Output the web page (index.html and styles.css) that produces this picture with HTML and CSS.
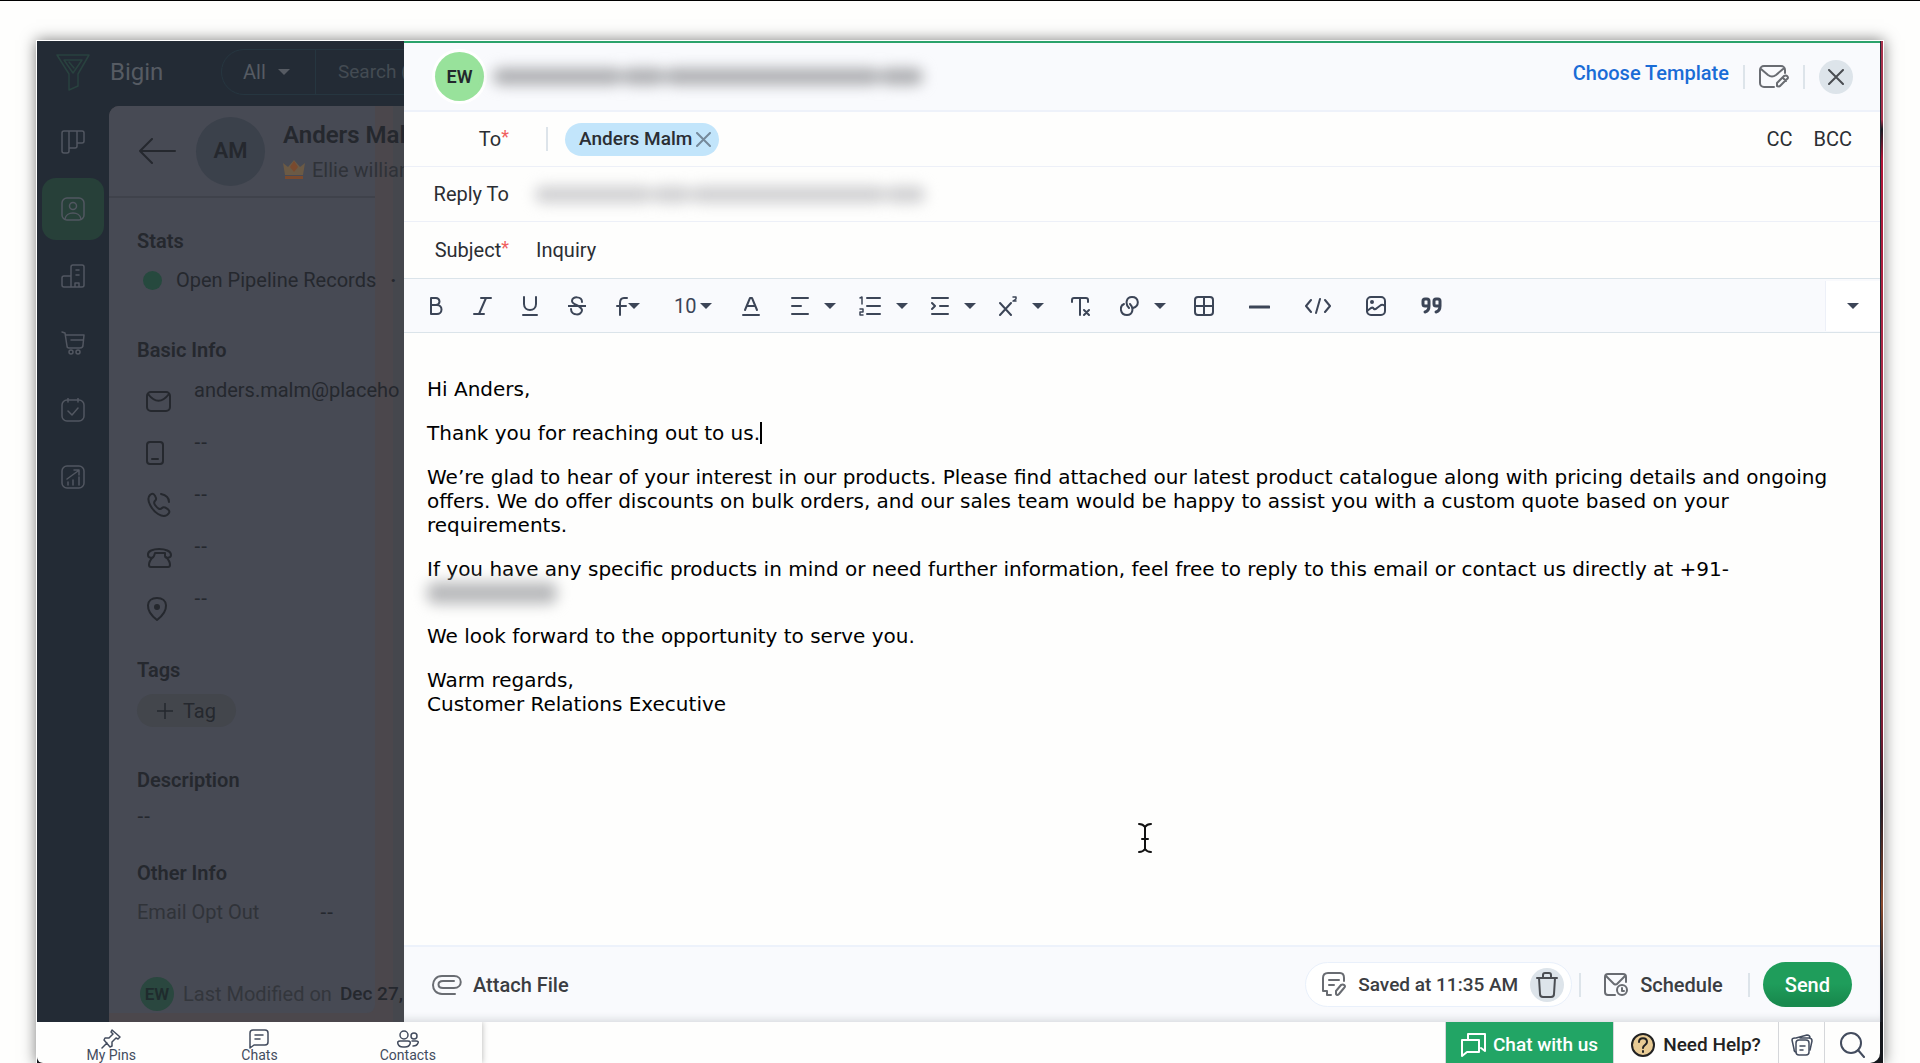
FILE: index.html
```html
<!DOCTYPE html>
<html lang="en">
<head>
<meta charset="utf-8">
<title>Bigin</title>
<meta name="viewport" content="width=device-width, initial-scale=1">
<link rel="stylesheet" href="styles.css">
</head>
<body>
<div class="frame">
  <div class="main">
    <div class="app">
      <header class="topbar">
        <svg class="logo" width="36" height="40" viewBox="0 0 36 40"><path d="M2 3h32L23 22v12l-9 4V22z"/><path d="M9 8h18l-9 13z"/><path d="M14 10l5 6"/></svg>
        <span class="brand">Bigin</span>
        <div class="searchbox">
          <button type="button" class="scope">All <i class="tri"></i></button>
          <span class="search-hint">Search (</span>
        </div>
      </header>
      <div class="app-body">
        <nav class="rail">
          <a href="#" aria-label="Pipelines"><svg width="24" height="24" viewBox="0 0 24 24"><path d="M1 3a2 2 0 0 1 2-2h18a2 2 0 0 1 2 2v8a2 2 0 0 1-2 2h-5v3a2 2 0 0 1-2 2H8v3a2 2 0 0 1-2 2H3a2 2 0 0 1-2-2zM8 1v17M16 1v12"/></svg></a>
          <a href="#" class="active" aria-label="Contacts"><svg width="24" height="24" viewBox="0 0 24 24"><rect x="1" y="1" width="22" height="22" rx="5"/><circle cx="12" cy="9" r="3.500"/><path d="M4 22c1-8 15-8 16 0"/></svg></a>
          <a href="#" aria-label="Companies"><svg width="24" height="24" viewBox="0 0 24 24"><path d="M10 23V3a2 2 0 0 1 2-2h9a2 2 0 0 1 2 2v18a2 2 0 0 1-2 2H3a2 2 0 0 1-2-2v-7a2 2 0 0 1 2-2h7M15 6h3M15 11h3M14 23v-4h4v4"/></svg></a>
          <a href="#" aria-label="Products"><svg width="24" height="24" viewBox="0 0 24 24"><path d="M1 1l3 1 2 13q0 2 2 2h11q3 0 3-3l1-10H5M10 9h12"/><circle cx="10" cy="21" r="2"/><circle cx="17" cy="21" r="2"/></svg></a>
          <a href="#" aria-label="Activities"><svg width="24" height="24" viewBox="0 0 24 24"><rect x="1" y="2" width="22" height="21" rx="5"/><path d="M7 0v4M17 0v4M7 13l4 4 6-7"/></svg></a>
          <a href="#" aria-label="Dashboards"><svg width="24" height="24" viewBox="0 0 24 24"><rect x="1" y="1" width="22" height="22" rx="5"/><path d="M6 14l11-8M13 5h5v5M7 20v-3M12 20v-5M18 20v-8"/></svg></a>
        </nav>
        <div class="record-wrap">
          <section class="record">
            <div class="record-head">
              <svg class="back" width="38" height="26" viewBox="0 0 38 26"><path d="M14 1L2 13l12 12M2 13h35"/></svg>
              <span class="avatar-am">AM</span>
              <div class="who">
                <h1>Anders Malm</h1>
                <p><svg width="22" height="20" viewBox="0 0 22 20"><path fill="#6b5a45" d="M0 3l5 4 6-7 6 7 5-4-2 12H2z"/><path fill="#7a4a2e" d="M11 1l4 6-4 5-4-5zM2 16h18v3H2z"/></svg>Ellie williams</p>
              </div>
            </div>
            <div class="record-body">
              <h2>Stats</h2>
              <p class="stat"><i></i>Open Pipeline Records<b>·</b></p>
              <h2 class="basic-title">Basic Info</h2>
              <ul class="info">
                <li><svg width="26" height="26" viewBox="0 0 26 26"><rect x="1" y="4" width="23" height="19" rx="4"/><path d="M2 6c7 9 14 9 21 0"/></svg>anders.malm@placeho</li>
                <li><svg width="26" height="26" viewBox="0 0 26 26"><rect x="1" y="2" width="16" height="22" rx="3"/><path d="M6 19h6"/></svg><span class="none">--</span></li>
                <li><svg width="26" height="26" viewBox="0 0 26 26"><path d="M4 3c3-3 5 0 6 3s-4 3-1 7 5 5 7 3 9 2 7 5-6 4-11 1S-1 8 4 3zM15 2c5 1 8 4 8 8"/></svg><span class="none">--</span></li>
                <li><svg width="26" height="26" viewBox="0 0 26 26"><path d="M8 12c-1 3-6 2-6-1C1 3 25 3 25 11c0 3-6 4-6 1V9H9zM7 13c-3 3-4 6-4 8q0 2 2 2h17q2 0 2-2c0-3-2-6-4-8"/></svg><span class="none">--</span></li>
                <li><svg width="26" height="26" viewBox="0 0 26 26"><path d="M11 24C-2 14 0 2 11 2s13 12 0 22z"/><circle cx="11" cy="11" r="2" fill="#25282e"/></svg><span class="none">--</span></li>
              </ul>
              <h2 class="tags-title">Tags</h2>
              <button type="button" class="tag"><svg width="16" height="16" viewBox="0 0 16 16"><path d="M8 0v16M0 8h16"/></svg>Tag</button>
              <h2 class="desc-title">Description</h2>
              <p class="none">--</p>
              <h2 class="other-title">Other Info</h2>
              <p class="opt"><span class="opt-label">Email Opt Out</span><span class="none">--</span></p>
              <p class="modified"><span class="avatar-ew">EW</span><span>Last Modified on</span><b>Dec 27,</b></p>
            </div>
          </section>
        </div>
      </div>
    </div>

    <form class="composer" onsubmit="return false">
      <div class="composer-head">
        <span class="sender">EW</span>
        <span class="redacted from"><i></i><i></i><i></i><i></i></span>
        <a href="#" class="choose">Choose Template</a>
        <span class="bar"></span>
        <button type="button" class="plain" aria-label="Email signature"><svg width="30" height="24" viewBox="0 0 30 24" class="ic-gray"><path d="M15 22H5a4 4 0 0 1-4-4V5a4 4 0 0 1 4-4h17a4 4 0 0 1 4 4v3M2 4l7 6q4 3 8 0l7-6M18 21v-3l7-7q2-1 3 0 2 2 0 3l-7 7q-2 1-3 0zM24 13l3 3"/></svg></button>
        <span class="bar"></span>
        <button type="button" class="close" aria-label="Close"><svg width="16" height="16" viewBox="0 0 16 16"><path d="M1 1l14 14M15 1L1 15"/></svg></button>
      </div>
      <div class="row">
        <span class="label">To<sup>*</sup></span>
        <span class="bar to-bar"></span>
        <span class="chip">Anders Malm<button type="button" class="plain" aria-label="Remove"><svg width="15" height="15" viewBox="0 0 15 15"><path d="M1 1l13 13M14 1L1 14"/></svg></button></span>
        <span class="copies"><button type="button" class="plain">CC</button><button type="button" class="plain">BCC</button></span>
      </div>
      <div class="row">
        <span class="label">Reply To</span>
        <span class="redacted reply"><i></i><i></i><i></i><i></i></span>
      </div>
      <div class="row subject">
        <label class="label" for="subject">Subject<sup>*</sup></label>
        <input id="subject" type="text" value="Inquiry">
      </div>
      <div class="toolbar">
        <div class="tools">
          <button type="button" aria-label="Bold"><svg width="14" height="20" viewBox="0 0 14 20"><path d="M2 2v16h6a4 4 0 0 0 0-9H2M2 2h5a3 3 0 0 1 0 7"/></svg></button>
          <button type="button" aria-label="Italic"><svg width="19" height="20" viewBox="0 0 19 20"><path d="M8 2h10M1 18h10M13 2L6 18"/></svg></button>
          <button type="button" aria-label="Underline"><svg width="16" height="20" viewBox="0 0 16 20"><path d="M2 1v7c0 8 12 8 12 0V1M1 19h14"/></svg></button>
          <button type="button" aria-label="Strikethrough"><svg width="18" height="20" viewBox="0 0 18 20"><path d="M14 6c0-6-10-6-10-1 0 4 9 4 10 9 0 6-11 6-11-1M0 10h18"/></svg></button>
          <button type="button" aria-label="Font"><svg width="12" height="20" viewBox="0 0 12 20"><path d="M11 2H8Q4 2 4 7v12M1 10h9"/></svg><i class="tri"></i></button>
          <button type="button" class="size">10<i class="tri"></i></button>
          <button type="button" aria-label="Text colour"><svg width="18" height="20" viewBox="0 0 18 20"><path d="M3 14L8 2h2l5 12M5 10h8M1 19h16"/></svg></button>
        </div>
        <div class="tools drops">
          <button type="button" aria-label="Align"><svg width="18" height="20" viewBox="0 0 18 20"><path d="M1 2h16M1 10h9M1 18h16"/></svg><i class="tri"></i></button>
          <button type="button" aria-label="List"><svg width="22" height="20" viewBox="0 0 22 20"><path d="M8 2h13M8 10h13M8 18h13"/><path class="thin" d="M1 2l2-1v7M1 13h3v3H1v3h3"/></svg><i class="tri"></i></button>
          <button type="button" aria-label="Indent"><svg width="18" height="20" viewBox="0 0 18 20"><path d="M1 2h16M9 10h8M1 18h16M1 7l3 3-3 3"/></svg><i class="tri"></i></button>
          <button type="button" aria-label="Superscript"><svg width="18" height="20" viewBox="0 0 18 20"><path d="M1 7l11 12M12 7L1 19"/><path class="thin" d="M14 1h3v2l-3 2h3"/></svg><i class="tri"></i></button>
        </div>
        <div class="tools links">
          <button type="button" aria-label="Clear formatting"><svg width="19" height="20" viewBox="0 0 19 20"><path d="M1 6V4q0-2 2-2h12q2 0 2 2v2M9 2v17M13 14l5 5M18 14l-5 5"/></svg></button>
          <button type="button" aria-label="Link"><svg width="19" height="20" viewBox="0 0 19 20"><path d="M9 12C5 8 6 1 12 1c7 0 8 9 1 11M10 8c4 4 3 11-3 11-7 0-8-9-3-11"/></svg><i class="tri"></i></button>
        </div>
        <div class="tools inserts">
          <button type="button" aria-label="Table"><svg width="20" height="20" viewBox="0 0 20 20"><rect x="1" y="1" width="18" height="18" rx="3"/><path d="M10 1v18M1 10h18"/></svg></button>
          <button type="button" aria-label="Rule"><svg width="21" height="20" viewBox="0 0 21 20"><path d="M1 11h19" stroke-width="3"/></svg></button>
          <button type="button" aria-label="HTML"><svg width="26" height="20" viewBox="0 0 26 20"><path d="M6 4L1 10l5 6M20 4l5 6-5 6M15 3l-4 14"/></svg></button>
          <button type="button" aria-label="Image"><svg width="20" height="20" viewBox="0 0 20 20"><rect x="1" y="1" width="18" height="18" rx="4"/><circle cx="6" cy="6" r="1"/><path d="M1 15l4-3q2-1 3 1 1 1 3-1l4-3q2-1 4 1"/></svg></button>
          <button type="button" aria-label="Quote"><svg class="heavy" width="21" height="20" viewBox="0 0 21 20"><path d="M8 10H4Q2 10 2 8V5q0-2 2-2h2q2 0 2 2v5q0 5-4 6M19 10h-4q-2 0-2-2V5q0-2 2-2h2q2 0 2 2v5q0 5-4 6"/></svg></button>
        </div>
        <button type="button" class="more" aria-label="More"><i class="tri"></i></button>
      </div>
      <div class="editor" contenteditable="true" role="textbox" aria-label="Message" spellcheck="false">
        <p>Hi Anders,</p>
        <p>Thank you for reaching out to us.<span class="caret"></span></p>
        <p>We’re glad to hear of your interest in our products. Please find attached our latest product catalogue along with pricing details and ongoing offers. We do offer discounts on bulk orders, and our sales team would be happy to assist you with a custom quote based on your requirements.</p>
        <p>If you have any specific products in mind or need further information, feel free to reply to this email or contact us directly at +91-<br><span class="redacted phone"><i></i></span></p>
        <p>We look forward to the opportunity to serve you.</p>
        <p>Warm regards,<br>Customer Relations Executive</p>
        <svg class="pointer" width="16" height="32" viewBox="0 0 16 32"><path d="M2 2q4 0 6 3 2-3 6-3M8 5v22M2 30q4 0 6-3 2 3 6 3M5 17h6"/></svg>
      </div>
      <div class="composer-foot">
        <button type="button" class="attach"><svg width="30" height="20" viewBox="0 0 30 20" class="ic-gray"><path d="M23 19H10C-2 19-2 1 10 1h12c9 0 9 12 0 12H11c-6 0-6-7 0-7h11"/></svg>Attach File</button>
        <span class="saved"><svg width="24" height="25" viewBox="0 0 24 25" class="ic-gray"><path d="M9 23H5v-4H1V6q0-5 5-5h12q4 0 4 5v3M7 8h10M7 13h5M14 22v-3l5-6q2-1 3 0 2 1 0 3l-5 6q-2 2-3 0z"/></svg>Saved at 11:35 AM<button type="button" class="trash" aria-label="Discard draft"><svg width="22" height="26" viewBox="0 0 22 26"><path d="M1 6h20M3 6l1 16q0 3 3 3h8q3 0 3-3l1-16M7 5V3q0-2 2-2h4q2 0 2 2v2"/></svg></button></span>
        <span class="bar"></span>
        <button type="button" class="schedule"><svg width="24" height="24" viewBox="0 0 24 24" class="ic-gray"><path d="M11 22H4q-3 0-3-3V4q0-3 3-3h15q3 0 3 3v5M2 3l8 8q2 1 3 0l8-8"/><circle cx="18" cy="17" r="5"/><path d="M18 15v3h2"/></svg>Schedule</button>
        <span class="bar"></span>
        <button type="submit" class="send">Send</button>
      </div>
    </form>
    <div class="edge"></div>
  </div>

  <footer class="dock">
    <nav class="dock-left">
      <a href="#"><svg width="20" height="20" viewBox="0 0 20 20"><path d="M11 1l8 7-2 2-2-1-4 4v4l-2 1-6-7 1-2 4 0 4-4-2-2zM6 14l-5 5"/></svg>My Pins</a>
      <a href="#"><svg width="20" height="20" viewBox="0 0 20 20"><path d="M1 19V4q0-3 3-3h12q3 0 3 3v9q0 3-3 3H5zM6 6h8M6 10h5"/></svg>Chats</a>
      <a href="#"><svg width="22" height="20" viewBox="0 0 22 20"><circle cx="7" cy="6" r="4"/><circle cx="17" cy="7" r="3"/><path d="M3 12h8q3 0 2 3-1 3-5 3H6q-4 0-5-3-1-3 2-3zM15 12h4q3 0 2 2-1 3-5 3"/></svg>Contacts</a>
    </nav>
    <div class="dock-right">
      <button type="button" class="chat"><svg width="25" height="24" viewBox="0 0 25 24"><path d="M7 7V1h17v17l-4-3M1 7h17v12H6l-5 4z"/></svg>Chat with us</button>
      <button type="button" class="help"><svg width="24" height="24" viewBox="0 0 24 24"><circle cx="12" cy="12" r="11" fill="#e8cb94"/><path d="M8 9c0-5 8-5 8 0 0 3-4 3-4 6M12 18v1"/></svg>Need Help?</button>
      <button type="button" class="notes" aria-label="Notes"><svg width="22" height="22" viewBox="0 0 22 22"><rect x="5" y="6" width="13" height="15" rx="3"/><path d="M9 12h5M9 16h3M5 18q-2 0-2-3L1 6q0-2 3-2M5 4l11-3q3 0 3 3M9 4h9q3 0 3 3l-2 9"/></svg></button>
      <button type="button" class="find" aria-label="Search"><svg width="26" height="26" viewBox="0 0 26 26"><circle cx="11" cy="11" r="10"/><path d="M18 18l6 7"/></svg></button>
    </div>
  </footer>
</div>
</body>
</html>
```

FILE: styles.css
```css
* { box-sizing: border-box; }
body {
  margin: 0;
  min-height: 100vh;
  display: flex;
  border-top: 1px solid #000;
  background: #fefefd;
  font: 20px/24px Roboto, "Liberation Sans", sans-serif;
  color: #2b2e33;
}
h1, h2, p, ul { margin: 0; padding: 0; }
h1, h2 { font-weight: 600; }
ul { list-style: none; }
svg { display: block; flex: none; fill: none; stroke: currentColor; stroke-width: 2; stroke-linecap: round; stroke-linejoin: round; }
button { font: inherit; color: inherit; background: none; border: 0; padding: 0; display: flex; align-items: center; white-space: nowrap; }
a { color: inherit; text-decoration: none; }
.tri { flex: none; border: 6px solid transparent; border-top-color: currentColor; border-bottom: 0; }

.frame {
  flex: 1;
  min-width: 0;
  display: flex;
  flex-direction: column;
  margin: 40px 37px 0;
  background: #15171c;
  box-shadow: 0 0 0 1px #fff, 0 0 14px 1px rgba(0, 0, 0, .5);
}
.main { flex: 1; display: flex; min-height: 0; }

/* dimmed record page behind the composer */
.app { width: 367px; flex: none; overflow: hidden; display: flex; flex-direction: column; background: #232b35; color: #25282e; white-space: nowrap; }
.topbar { display: flex; align-items: center; height: 65px; flex: none; padding: 0 0 3px 18px; color: #565b63; }
.logo { color: #29423f; stroke-width: 1.5; }
.brand { flex: none; width: 111px; margin-left: 19px; font-size: 24px; }
.searchbox { display: flex; align-items: center; height: 46px; width: 400px; flex: none; border: 1px solid #263640; border-radius: 23px; }
.scope { gap: 12px; flex: none; padding-left: 21px; width: 94px; height: 44px; border-right: 1px solid #263640; }
.search-hint { padding-left: 22px; font-size: 19px; color: #444b53; }
.app-body { flex: 1; display: flex; }
.rail { width: 72px; flex: none; display: flex; flex-direction: column; gap: 5px; padding: 5px 5px 0; color: #525761; }
.rail a { height: 62px; display: grid; place-items: center; border-radius: 14px; }
.rail .active { background: #274039; }
.rail svg { stroke-width: 1.5; }
.record-wrap { flex: 1; min-width: 0; display: flex; padding-bottom: 9px; border-radius: 10px 0 0 0; background: linear-gradient(90deg, #4b474c 284px, #45474d 284px); }
.record { width: 266px; flex: none; display: flex; flex-direction: column; background: #474a54; border-radius: 10px 0 8px 0; }
.record-head { display: flex; align-items: center; height: 92px; flex: none; padding-left: 29px; border-bottom: 2px solid #3f424b; }
.avatar-am { width: 69px; height: 69px; flex: none; margin: 0 18px 0 20px; border-radius: 50%; background: #3b414b; display: grid; place-items: center; font-size: 22px; font-weight: 600; }
.who { padding-top: 4px; }
.who h1 { font-size: 24px; line-height: 34px; }
.who p { display: flex; gap: 7px; align-items: center; line-height: 36px; color: #2f3238; }
.who svg { stroke: none; }
.record-body { flex: 1; display: flex; flex-direction: column; align-items: flex-start; padding: 31px 0 2px 28px; }
.none { font-family: "Liberation Sans", sans-serif; }
h2 { font-size: 20px; }
.stat { display: flex; align-items: center; gap: 14px; padding: 15px 0 0 6px; }
.stat i { width: 19px; height: 19px; border-radius: 50%; background: #26493e; }
.basic-title { margin: 46px 0 16px; }
.info li { display: flex; gap: 22px; height: 52px; padding-left: 9px; }
.info svg { margin-top: 10px; }
.tags-title { margin: 20px 0 12px; }
.tag { gap: 10px; height: 33px; padding: 0 20px; border-radius: 17px; background: #43464c; }
.tag svg { stroke-width: 1.5; }
.desc-title { margin: 41px 0 12px; }
.other-title { margin: 33px 0 15px; }
.opt { display: flex; }
.opt-label { width: 183px; color: #303339; }
.modified { display: flex; align-items: center; margin-top: auto; padding-left: 3px; color: #33363c; }
.modified b { margin-left: 8px; color: #25282e; font-weight: 500; font-size: 19px; }
.avatar-ew { width: 34px; height: 34px; margin-right: 9px; border-radius: 50%; background: #2a473f; color: #1f2b2d; display: grid; place-items: center; font-size: 17px; font-weight: 600; }

/* composer */
.composer { flex: 1; min-width: 0; display: flex; flex-direction: column; background: #fefefd; }
.composer-head { display: flex; align-items: center; height: 71px; padding: 0 27px 0 31px; background: #f9fafd; border-top: 2px solid #2ba26b; border-bottom: 2px solid #eef2fa; }
.bar { width: 2px; height: 24px; flex: none; background: #dde4ea; }
.sender { width: 49px; height: 49px; flex: none; border-radius: 50%; background: #98e29b; box-shadow: 0 0 0 3px #fff; display: grid; place-items: center; font-size: 18px; font-weight: 600; color: #23282c; }
.redacted { display: flex; align-items: center; filter: blur(7px); }
.redacted i { height: 17px; border-radius: 8px; background: #acadb0; }
.from { margin-left: 9px; width: 430px; }
.from i, .reply i { flex: 3; }
.from i:nth-child(2), .reply i:nth-child(2) { flex: 1; }
.from i:nth-child(3), .reply i:nth-child(3) { flex: 5; }
.from i:nth-child(4), .reply i:nth-child(4) { flex: 1; }
.reply { width: 390px; margin-left: 26px; }
.reply i { background: #cfcfd1; }
.choose { margin: 0 14px 7px auto; color: #1a6cd6; font-weight: 500; }
.composer-head .plain { margin: 0 14px; }
.ic-gray { color: #696c72; }
.close { width: 34px; height: 34px; margin-left: 14px; border-radius: 50%; background: #dde4ea; justify-content: center; color: #4a4d52; }
.row { display: flex; align-items: center; height: 55px; padding: 0 28px; border-bottom: 1px solid #edf0f8; }
.label { width: 77px; flex: none; text-align: right; white-space: nowrap; }
sup { font-size: 18px; line-height: 0; color: #f0605f; vertical-align: 3px; }
.to-bar { margin: 0 17px 0 37px; }
.chip { display: flex; align-items: center; gap: 4px; height: 33px; padding: 0 8px 0 14px; border-radius: 17px; background: #c2e5fb; font-size: 19px; font-weight: 500; }
.chip svg { color: #75899a; }
.copies { display: flex; gap: 21px; margin-left: auto; }
.subject { height: 57px; border-color: #dbe4ea; }
.subject input { flex: 1; min-width: 0; margin-left: 27px; padding: 0; border: 0; outline: 0; background: none; font: inherit; color: inherit; }
.toolbar { display: flex; align-items: center; height: 54px; padding-left: 25px; background: #f9fafd; border-bottom: 1px solid #dbe4ea; color: #3c4557; }
.tools { display: flex; align-items: center; gap: 30px; }
.tools .thin { stroke-width: 1.5; }
.tools .heavy { stroke-width: 3; }
.size { gap: 4px; margin-left: 4px; }
.drops { gap: 23px; margin-left: 31px; }
.drops button { gap: 15px; }
.links { margin-left: 27px; }
.links button { gap: 15px; }
.inserts { gap: 35px; margin-left: 28px; }
.more { align-self: stretch; width: 55px; margin: 2px 0 1px auto; justify-content: center; background: #fff; border-left: 1px solid #edf0f8; }
.editor { flex: 1; position: relative; padding: 44px 23px 20px; outline: 0; font-family: "DejaVu Sans", Verdana, sans-serif; color: #000; }
.editor p { margin-bottom: 20px; }
.caret { display: inline-block; width: 2px; height: 22px; background: #000; vertical-align: -4px; }
.phone { height: 23px; }
.phone i { width: 130px; height: 22px; background: #b8b9bb; }
.pointer { position: absolute; left: 733px; top: 489px; color: #111; }
.composer-foot { display: flex; align-items: center; height: 77px; padding: 0 28px; background: #f9fafd; border-top: 2px solid #edf2fb; box-shadow: inset 0 -8px 8px -6px #d5d8dc; color: #3b3d42; font-weight: 500; }
.attach { gap: 11px; margin-right: auto; }
.saved { display: flex; align-items: center; gap: 12px; height: 45px; padding: 0 7px 0 16px; margin-right: 7px; border: 1px solid #e9f0fb; border-radius: 23px; background: #fff; font-size: 19px; }
.trash { width: 34px; height: 34px; border-radius: 50%; background: #dde4ea; justify-content: center; color: #4a4d52; }
.schedule { gap: 12px; margin: 0 25px 0 23px; }
.send { height: 45px; padding: 0 22px; margin-left: 13px; border-radius: 23px; background: linear-gradient(#1f9d5b, #1f9d5b 48%, #188a4e 90%); color: #fff; }
.edge { width: 3px; flex: none; border-left: 1px solid #232b35; background: linear-gradient(#a8324c 0, #a8324c 8%, #1b1b22 9%, #b01436 12%, #a8324c 40%, #7d1c33 70%, #2a1a22 78%, #8a4a2e 88%, #1b1b22 96%); }

/* bottom dock */
.dock { display: flex; height: 41px; margin-right: 3px; background: #fefefd; border-radius: 0 0 10px 6px; overflow: hidden; color: #434c5e; }
.dock-left { display: flex; width: 445px; box-shadow: 0 0 6px rgba(0, 0, 0, .3); }
.dock-left a { flex: 1; display: flex; flex-direction: column; align-items: center; padding-top: 7px; font-size: 14px; line-height: 13px; }
.dock-left svg { stroke-width: 1.5; }
.dock-right { display: flex; margin-left: auto; font-size: 19px; font-weight: 500; }
.dock-right button { border-left: 1px solid #d5d7da; justify-content: center; padding-top: 5px; }
.dock-right .chat { width: 168px; gap: 7px; background: #22a565; color: #fff; }
.dock-right .help { width: 165px; gap: 8px; color: #222; }
.dock-right .notes { width: 46px; }
.dock-right .notes svg { stroke-width: 1.5; }
.dock-right .find { width: 56px; }
```
